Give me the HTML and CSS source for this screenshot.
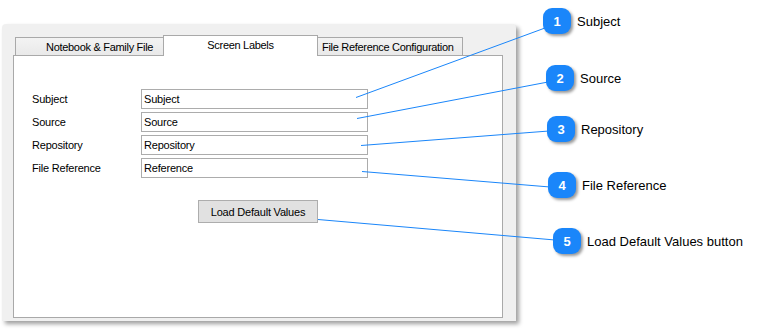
FILE: index.html
```html
<!DOCTYPE html>
<html>
<head>
<meta charset="utf-8">
<link rel="stylesheet" href="styles.css">
</head>
<body>
<div class="stage">
  <div class="window">
    <div class="tabs">
      <div class="tab tab-first">Notebook &amp; Family File</div>
      <div class="tab tab-active">Screen Labels</div>
      <div class="tab tab-last">File Reference Configuration</div>
    </div>
    <div class="pane">
      <div class="form">
        <div class="row"><span class="label">Subject</span><div class="input">Subject</div></div>
        <div class="row"><span class="label">Source</span><div class="input">Source</div></div>
        <div class="row"><span class="label">Repository</span><div class="input">Repository</div></div>
        <div class="row"><span class="label">File Reference</span><div class="input">Reference</div></div>
      </div>
      <div class="actions"><button class="btn">Load Default Values</button></div>
    </div>
  </div>

  <svg class="leaders" width="757" height="331" viewBox="0 0 757 331">
    <g stroke="#1a86fa" stroke-width="1" fill="none">
      <line x1="356" y1="97.5" x2="545" y2="28"/>
      <line x1="357" y1="118.5" x2="548" y2="82"/>
      <line x1="361" y1="145.5" x2="549" y2="131"/>
      <line x1="362" y1="171.5" x2="550" y2="187"/>
      <line x1="318" y1="219.5" x2="555" y2="240"/>
    </g>
  </svg>

  <div class="callout c1"><span class="badge">1</span><span class="ctext">Subject</span></div>
  <div class="callout c2"><span class="badge">2</span><span class="ctext">Source</span></div>
  <div class="callout c3"><span class="badge">3</span><span class="ctext">Repository</span></div>
  <div class="callout c4"><span class="badge">4</span><span class="ctext">File Reference</span></div>
  <div class="callout c5"><span class="badge">5</span><span class="ctext">Load Default Values button</span></div>
</div>
</body>
</html>
```

FILE: styles.css
```css
* { box-sizing: border-box; }
html, body { margin: 0; padding: 0; background: #ffffff; }
body { font-family: "Liberation Sans", Arial, sans-serif; }

.stage {
  position: relative;
  width: 757px;
  height: 331px;
  overflow: hidden;
}

.window {
  margin: 24px 0 0 2px;
  width: 514px;
  height: 297px;
  background: #f0f0f0;
  border-radius: 4px 4px 0 0;
  box-shadow: 3px 3px 4px rgba(0, 0, 0, 0.38);
  padding: 11px 13px 3px 11px;
  display: flex;
  flex-direction: column;
}

.tabs {
  display: flex;
  align-items: flex-end;
  height: 20px;
  padding-left: 2px;
  position: relative;
  z-index: 2;
}

.tab {
  font-size: 11px;
  letter-spacing: -0.3px;
  color: #000;
  border: 1px solid #a9a9a9;
  border-bottom: none;
  background: linear-gradient(#f3f3f3, #e9e9e9);
  height: 18px;
  line-height: 18px;
  white-space: nowrap;
}

.tab-first {
  width: 149px;
  padding-left: 30px;
}

.tab-active {
  width: 155px;
  height: 21px;
  margin-left: -1px;
  margin-bottom: -1px;
  background: #ffffff;
  text-align: center;
  line-height: 18px;
}

.tab-last {
  width: 146px;
  margin-left: -1px;
  padding-left: 4px;
}

.pane {
  flex: 1;
  background: #ffffff;
  border: 1px solid #a9a9a9;
  padding: 33px 0 0 18px;
  display: flex;
  flex-direction: column;
}

.form {
  display: flex;
  flex-direction: column;
  gap: 3px;
}

.row {
  display: flex;
  align-items: center;
  height: 20px;
}

.label {
  width: 109px;
  font-size: 11px;
  letter-spacing: -0.2px;
  color: #000;
}

.input {
  width: 227px;
  height: 20px;
  border: 1px solid #acacac;
  font-size: 11px;
  letter-spacing: -0.2px;
  line-height: 18px;
  padding-left: 2px;
  color: #000;
}

.actions {
  display: flex;
  justify-content: center;
  margin-top: 22px;
  padding-right: 18px;
}

.btn {
  width: 120px;
  height: 23px;
  background: #e1e1e1;
  border: 1px solid #adadad;
  border-radius: 0;
  font-family: "Liberation Sans", Arial, sans-serif;
  font-size: 11px;
  letter-spacing: -0.2px;
  color: #000;
  padding: 0;
}

.leaders {
  position: absolute;
  left: 0;
  top: 0;
  z-index: 3;
}

.callout {
  position: absolute;
  display: flex;
  align-items: center;
  gap: 6px;
  z-index: 4;
}

.badge {
  width: 28px;
  height: 26px;
  border-radius: 9px;
  background: #1a86fa;
  color: #ffffff;
  font-weight: bold;
  font-size: 13px;
  display: flex;
  align-items: center;
  justify-content: center;
  box-shadow: 2px 2px 3px rgba(0, 0, 0, 0.4);
}

.ctext {
  font-size: 13px;
  color: #000;
}

.c1 { left: 543px; top: 8px; }
.c2 { left: 546px; top: 65px; }
.c3 { left: 547px; top: 116px; }
.c4 { left: 548px; top: 172px; }
.c5 { left: 553px; top: 228px; }
```
